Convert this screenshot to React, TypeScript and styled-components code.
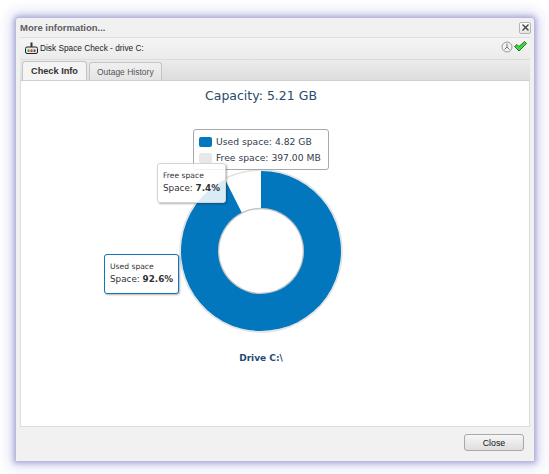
import styled, { createGlobalStyle } from 'styled-components';

const GlobalStyle = createGlobalStyle`
  html, body { margin: 0; padding: 0; background: #fff; }
  body { width: 549px; height: 474px; overflow: hidden; font-family: "DejaVu Sans", sans-serif; }
`;

const Page = styled.div`
  width: 549px;
  height: 474px;
  padding: 18px 15px 13px 16px;
  box-sizing: border-box;
`;

const Dialog = styled.div`
  height: 100%;
  display: flex;
  flex-direction: column;
  background: #f1f1f1;
  border-radius: 3px 3px 0 0;
  box-shadow: 0 0 5px 2px #a9a9d8, 0 0 14px 6px #dcdcf2;
`;

const TitleBar = styled.div`
  height: 19px;
  display: flex;
  align-items: center;
  justify-content: space-between;
  padding: 0 3px 0 4px;
  flex-shrink: 0;
`;

const Title = styled.div`
  font: bold 9.5px "Liberation Sans", sans-serif;
  color: #5c5c5c;
`;

const CloseBox = styled.div`
  width: 10px;
  height: 10px;
  border: 1px solid #b4b4b4;
  border-radius: 2px;
  background: linear-gradient(#fff, #e4e4e4);
  display: flex;
  align-items: center;
  justify-content: center;
`;

const Inner = styled.div`
  flex: 1;
  margin: 0 4px;
  display: flex;
  flex-direction: column;
  min-height: 0;
`;

const CheckBar = styled.div`
  height: 22px;
  display: flex;
  align-items: center;
  justify-content: space-between;
  padding: 0 3px 2px 5px;
  box-sizing: border-box;
  background: linear-gradient(#f5f5f5, #ebebeb);
  border-top: 1px solid #dedede;
  flex-shrink: 0;
`;

const CheckName = styled.div`
  display: flex;
  align-items: center;
  gap: 2px;
  font: 8.3px "Liberation Sans", sans-serif;
  color: #222;
`;

const StatusIcons = styled.div`
  display: flex;
  align-items: center;
  gap: 1px;
  margin-top: -2px;
`;

const TabBar = styled.div`
  height: 21px;
  display: flex;
  align-items: flex-end;
  gap: 2px;
  padding-left: 2px;
  background: linear-gradient(#ececec, #dddddd);
  border-top: 1px solid #dcdcdc;
  box-sizing: border-box;
  flex-shrink: 0;
`;

const Tab = styled.div<{ $active?: boolean }>`
  height: ${({ $active }) => ($active ? 19 : 18)}px;
  display: flex;
  align-items: center;
  box-sizing: border-box;
  padding: 0 ${({ $active }) => ($active ? 8 : 7)}px;
  border: 1px solid #c4c4c4;
  border-bottom: none;
  border-radius: 3px 3px 0 0;
  background: ${({ $active }) => ($active ? '#f4f4f4' : 'linear-gradient(#f0f0f0, #e4e4e4)')};
  font: ${({ $active }) => ($active ? 'bold 9.2px' : '8.5px')} "Liberation Sans", sans-serif;
  color: ${({ $active }) => ($active ? '#333' : '#555')};
`;

const Content = styled.div`
  flex: 1;
  min-height: 0;
  background: #fff;
  border: 1px solid #dcdcdc;
  border-top: 1px solid #cfcfcf;
`;

const Chart = styled.div`
  position: relative;
  width: 480px;
  height: 100%;
  display: flex;
  flex-direction: column;
  align-items: center;
`;

const Capacity = styled.div`
  margin-top: 6px;
  font: 12.5px/18px "DejaVu Sans", sans-serif;
  color: #274b6d;
`;

const Donut = styled.svg`
  display: block;
  margin-top: 62px;
`;

const Caption = styled.div`
  margin-top: 16px;
  font: bold 9px/14px "DejaVu Sans", sans-serif;
  color: #1c4b78;
`;

const Legend = styled.div`
  position: absolute;
  left: 172px;
  top: 48px;
  width: 136px;
  height: 41px;
  box-sizing: border-box;
  padding: 4px 5px;
  display: flex;
  flex-direction: column;
  justify-content: space-between;
  background: #fff;
  border: 1px solid #a9a9a9;
  border-radius: 3px;
`;

const LegendRow = styled.div`
  display: flex;
  align-items: center;
  gap: 4px;
  font: 9.2px/15px "DejaVu Sans", sans-serif;
  color: #333c4c;
  white-space: nowrap;
`;

const Swatch = styled.span<{ $color: string }>`
  width: 13px;
  height: 10px;
  border-radius: 2px;
  background: ${({ $color }) => $color};
  flex-shrink: 0;
`;

const PieTip = styled.div<{ $used?: boolean }>`
  position: absolute;
  box-sizing: border-box;
  left: ${({ $used }) => ($used ? 83 : 136)}px;
  top: ${({ $used }) => ($used ? 173 : 82)}px;
  width: ${({ $used }) => ($used ? 75 : 69)}px;
  height: 40px;
  padding: 6px 0 0 5px;
  background: ${({ $used }) => ($used ? '#fff' : 'rgba(255, 255, 255, 0.85)')};
  border: 1px solid ${({ $used }) => ($used ? '#0f76bb' : '#d4d4d4')};
  border-radius: 3px;
  box-shadow: 1px 1px 2px rgba(0, 0, 0, 0.3);
  color: #333;
`;

const TipName = styled.div`
  font: 7.6px/12px "DejaVu Sans", sans-serif;
`;

const TipValue = styled.div`
  font: 8.8px/13px "DejaVu Sans", sans-serif;
  white-space: nowrap;
  b { font-weight: bold; }
`;

const Footer = styled.div`
  height: 34px;
  display: flex;
  align-items: center;
  justify-content: flex-end;
  padding: 0 10px 3px 0;
  box-sizing: border-box;
  flex-shrink: 0;
`;

const CloseButton = styled.button`
  width: 60px;
  height: 17px;
  padding: 0;
  border: 1px solid #a8a8a8;
  border-radius: 3px;
  background: linear-gradient(#f6f6f6, #dedede);
  font: 8.8px "Liberation Sans", sans-serif;
  color: #111;
`;

const DriveIcon = () => (
  <svg width="13" height="12" viewBox="0 0 13 12">
    <rect x="5.5" y="0.5" width="2" height="5" fill="#333" />
    <rect x="0.5" y="5" width="12" height="6.5" rx="1.5" fill="#e8e8e8" stroke="#222" />
    <rect x="2.5" y="7.5" width="2" height="2.5" fill="#3a3" />
    <rect x="5.5" y="7.5" width="2" height="2.5" fill="#d33" />
    <rect x="8.5" y="7.5" width="2" height="2.5" fill="#555" />
  </svg>
);

const ClockIcon = () => (
  <svg width="12" height="12" viewBox="0 0 12 12">
    <circle cx="6" cy="6" r="5" fill="#f2f2f2" stroke="#999" />
    <path d="M6 2.5v3.5M6 6L3.5 8.5M6 6L8.5 8.5" stroke="#777" fill="none" />
  </svg>
);

const CheckIcon = () => (
  <svg width="13" height="11" viewBox="0 0 13 11">
    <path d="M0.5 5.5L3 3.5L5 5.5L10.5 0.5L12.5 2.5L5 10Z" fill="#2fe02f" stroke="#2c4a2c" strokeWidth="0.8" />
  </svg>
);

const polar = (r: number, deg: number) => {
  const a = ((deg - 90) * Math.PI) / 180;
  return `${(84 + r * Math.cos(a)).toFixed(2)} ${(84 + r * Math.sin(a)).toFixed(2)}`;
};

// used slice runs clockwise from 12 o'clock, free slice stays white
const usedEnd = 360 * 0.926;
const slicePath = `M${polar(80, 0)} A80 80 0 1 1 ${polar(80, usedEnd)} L${polar(43, usedEnd)} A43 43 0 1 0 ${polar(43, 0)} Z`;

export default function App() {
  return (
    <Page>
      <GlobalStyle />
      <Dialog>
        <TitleBar>
          <Title>More information...</Title>
          <CloseBox>
            <svg width="7" height="7" viewBox="0 0 7 7">
              <path d="M0.5 0.5L6.5 6.5M6.5 0.5L0.5 6.5" stroke="#444" strokeWidth="1.4" />
            </svg>
          </CloseBox>
        </TitleBar>
        <Inner>
          <CheckBar>
            <CheckName>
              <DriveIcon />
              Disk Space Check - drive C:
            </CheckName>
            <StatusIcons>
              <ClockIcon />
              <CheckIcon />
            </StatusIcons>
          </CheckBar>
          <TabBar>
            <Tab $active>Check Info</Tab>
            <Tab>Outage History</Tab>
          </TabBar>
          <Content>
            <Chart>
              <Capacity>Capacity: 5.21 GB</Capacity>
              <Donut width="168" height="168" viewBox="0 0 168 168">
                <circle cx="84" cy="84" r="81" fill="none" stroke="#e2e2e2" strokeWidth="1.5" />
                <circle cx="84" cy="84" r="42.5" fill="none" stroke="#c4c4c4" strokeWidth="1.5" />
                <path d={slicePath} fill="#0277bd" />
              </Donut>
              <Caption>Drive C:\</Caption>
              <Legend>
                <LegendRow>
                  <Swatch $color="#0277bd" />
                  Used space: 4.82 GB
                </LegendRow>
                <LegendRow>
                  <Swatch $color="#e8e8e8" />
                  Free space: 397.00 MB
                </LegendRow>
              </Legend>
              <PieTip>
                <TipName>Free space</TipName>
                <TipValue>
                  Space: <b>7.4%</b>
                </TipValue>
              </PieTip>
              <PieTip $used>
                <TipName>Used space</TipName>
                <TipValue>
                  Space: <b>92.6%</b>
                </TipValue>
              </PieTip>
            </Chart>
          </Content>
        </Inner>
        <Footer>
          <CloseButton>Close</CloseButton>
        </Footer>
      </Dialog>
    </Page>
  );
}
